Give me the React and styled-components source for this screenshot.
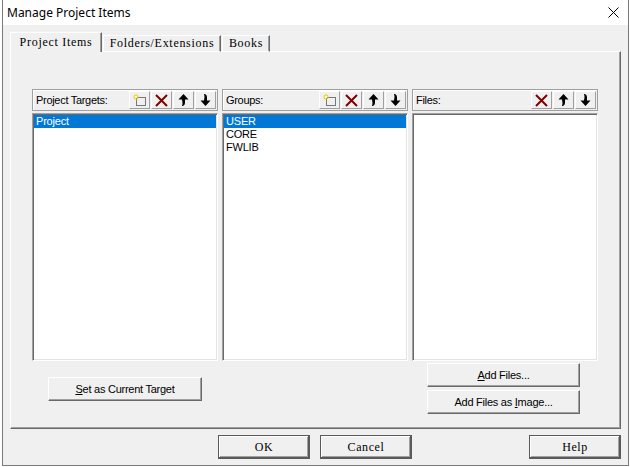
import React from "react";
import styled, { createGlobalStyle } from "styled-components";

const GlobalStyle = createGlobalStyle`
  body {
    margin: 0;
    background: #ffffff;
    font-family: "Liberation Sans", Arial, sans-serif;
  }
`;

const SANS = `"Liberation Sans", Arial, sans-serif`;
const SYSTEM = `"Liberation Serif", "Times New Roman", serif`;

const Window = styled.div`
  box-sizing: border-box;
  width: 627px;
  height: 466px;
  margin-left: 2px;
  border: 1px solid #7a7a7a;
  border-top: none;
  background: #f0f0f0;
  display: flex;
  flex-direction: column;
`;

const TitleBar = styled.div`
  height: 25px;
  flex-shrink: 0;
  background: #ffffff;
  display: flex;
  align-items: center;
  justify-content: space-between;
  padding: 0 9px 0 4px;
`;

const Title = styled.div`
  font-family: "Noto Sans", sans-serif;
  font-size: 12px;
  color: #000;
`;

const Body = styled.div`
  flex: 1;
  display: flex;
  flex-direction: column;
  padding: 8px 7px 0 7px;
`;

const TabStrip = styled.div`
  display: flex;
  align-items: flex-end;
  height: 19px;
  margin-bottom: -1px;
  position: relative;
  z-index: 1;
`;

const Tab = styled.div`
  box-sizing: border-box;
  width: ${(p) => p.w}px;
  height: ${(p) => (p.active ? 20 : 17)}px;
  margin-left: ${(p) => (p.active ? 0 : 1)}px;
  padding-top: ${(p) => (p.active ? 2 : 0)}px;
  background: #f0f0f0;
  border-top: 1px solid #ffffff;
  border-left: 1px solid #ffffff;
  border-right: 1px solid #696969;
  border-bottom: ${(p) => (p.active ? "none" : "1px solid #ffffff")};
  box-shadow: inset -1px 0 0 #a0a0a0;
  font-family: ${SYSTEM};
  font-size: 12px;
  letter-spacing: 0.7px;
  line-height: 15px;
  text-align: center;
  color: #000;
  white-space: nowrap;
`;

const Panel = styled.div`
  box-sizing: border-box;
  height: 378px;
  border-top: 1px solid #ffffff;
  border-left: 1px solid #ffffff;
  border-right: 1px solid #696969;
  border-bottom: 1px solid #696969;
  box-shadow: inset -1px -1px 0 #a0a0a0;
  padding: 37px 0 0 21px;
`;

const Columns = styled.div`
  display: grid;
  grid-template-columns: repeat(3, 186px);
  column-gap: 4px;
`;

const Column = styled.div`
  display: flex;
  flex-direction: column;
`;

const Header = styled.div`
  box-sizing: border-box;
  height: 22px;
  border: 1px solid #a0a0a0;
  box-shadow: inset 1px 1px 0 #ffffff;
  display: flex;
  align-items: center;
  padding: 0 1px 0 3px;
`;

const Label = styled.span`
  font-family: ${SANS};
  font-size: 11px;
  letter-spacing: -0.3px;
  color: #000;
`;

const ToolGroup = styled.div`
  margin-left: auto;
  display: flex;
  gap: 1px;
`;

const ToolButton = styled.div`
  box-sizing: border-box;
  width: 21px;
  height: 18px;
  border-top: 1px solid #ffffff;
  border-left: 1px solid #ffffff;
  border-right: 1px solid #a0a0a0;
  border-bottom: 1px solid #a0a0a0;
  display: flex;
  align-items: center;
  justify-content: center;
`;

const List = styled.div`
  box-sizing: border-box;
  margin-top: 2px;
  height: 248px;
  background: #ffffff;
  border-top: 1px solid #a0a0a0;
  border-left: 1px solid #a0a0a0;
  border-right: 1px solid #ffffff;
  border-bottom: 1px solid #ffffff;
  box-shadow: inset 1px 1px 0 #696969, inset -1px -1px 0 #e3e3e3;
  padding: 1px 1px 0 1px;
`;

const Item = styled.div`
  height: 13px;
  line-height: 13px;
  padding-left: 2px;
  font-family: ${SANS};
  font-size: 11px;
  letter-spacing: -0.2px;
  color: ${(p) => (p.selected ? "#ffffff" : "#000")};
  background: ${(p) => (p.selected ? "#0078d7" : "transparent")};
`;

const ButtonStack = styled.div`
  display: flex;
  flex-direction: column;
  gap: 3px;
  margin-top: ${(p) => p.top}px;
  padding-left: ${(p) => p.left}px;
`;

const PushButton = styled.div`
  box-sizing: border-box;
  width: ${(p) => p.w}px;
  height: 24px;
  background: #f0f0f0;
  border-top: 1px solid #ffffff;
  border-left: 1px solid #ffffff;
  border-right: 1px solid #696969;
  border-bottom: 1px solid #696969;
  box-shadow: inset -1px -1px 0 #a0a0a0;
  display: flex;
  align-items: center;
  justify-content: center;
  font-family: ${SANS};
  font-size: 11px;
  letter-spacing: -0.25px;
  color: #000;

  u {
    text-decoration: underline;
    text-underline-offset: 1px;
  }
`;

const Footer = styled.div`
  display: flex;
  margin-top: 6px;
`;

const DialogButton = styled.div`
  box-sizing: border-box;
  width: 92px;
  height: 24px;
  margin-left: ${(p) => p.gap || 0}px;
  background: #f0f0f0;
  border: 1px solid #5a5a5a;
  box-shadow: inset -1px -1px 0 #5a5a5a, inset 1px 1px 0 #ffffff,
    inset -2px -2px 0 #a0a0a0;
  display: flex;
  align-items: center;
  justify-content: center;
  font-family: ${SYSTEM};
  font-size: 12px;
  letter-spacing: 0.6px;
  color: #000;
`;

const HelpButton = styled(DialogButton)`
  margin-left: auto;
`;

function CloseIcon() {
  return (
    <svg width="11" height="11" viewBox="0 0 11 11">
      <path d="M0.5 0.5 L10.5 10.5 M10.5 0.5 L0.5 10.5" stroke="#000" strokeWidth="1" />
    </svg>
  );
}

function NewIcon() {
  return (
    <svg width="14" height="13" viewBox="0 0 14 13">
      <rect x="3.5" y="3.5" width="9" height="8" fill="none" stroke="#000" strokeDasharray="1 1" />
      <path d="M3 0 V6 M0 3 H6 M1 1 L5 5 M5 1 L1 5" stroke="#e8d000" strokeWidth="1" />
      <rect x="2" y="2" width="2" height="2" fill="#fffbd0" />
    </svg>
  );
}

function DeleteIcon() {
  return (
    <svg width="13" height="13" viewBox="0 0 13 13">
      <path d="M1 1 L12 12 M12 1 L1 12" stroke="#800000" strokeWidth="2" />
    </svg>
  );
}

function UpIcon() {
  return (
    <svg width="11" height="12" viewBox="0 0 11 12">
      <path d="M5.5 0 L10.5 5.5 L7 5.5 L7 9 Q7 11 5 12 L4 12 Q4.5 10.5 4.5 9 L4 5.5 L0.5 5.5 Z" fill="#000" />
    </svg>
  );
}

function DownIcon() {
  return (
    <svg width="11" height="12" viewBox="0 0 11 12">
      <path d="M5.5 12 L10.5 6.5 L7 6.5 L7 3 Q7 1 5 0 L4 0 Q4.5 1.5 4.5 3 L4 6.5 L0.5 6.5 Z" fill="#000" />
    </svg>
  );
}

function Tools({ withNew }) {
  return (
    <ToolGroup>
      {withNew && (
        <ToolButton>
          <NewIcon />
        </ToolButton>
      )}
      <ToolButton>
        <DeleteIcon />
      </ToolButton>
      <ToolButton>
        <UpIcon />
      </ToolButton>
      <ToolButton>
        <DownIcon />
      </ToolButton>
    </ToolGroup>
  );
}

const targets = ["Project"];
const groups = ["USER", "CORE", "FWLIB"];

export default function App() {
  return (
    <>
      <GlobalStyle />
      <Window>
        <TitleBar>
          <Title>Manage Project Items</Title>
          <CloseIcon />
        </TitleBar>
        <Body>
          <TabStrip>
            <Tab active w={92}>Project Items</Tab>
            <Tab w={118}>Folders/Extensions</Tab>
            <Tab w={48}>Books</Tab>
          </TabStrip>
          <Panel>
            <Columns>
              <Column>
                <Header>
                  <Label>Project Targets:</Label>
                  <Tools withNew />
                </Header>
                <List>
                  {targets.map((t, i) => (
                    <Item key={t} selected={i === 0}>
                      {t}
                    </Item>
                  ))}
                </List>
                <ButtonStack top={16} left={16}>
                  <PushButton w={154}>
                    <span>
                      <u>S</u>et as Current Target
                    </span>
                  </PushButton>
                </ButtonStack>
              </Column>
              <Column>
                <Header>
                  <Label>Groups:</Label>
                  <Tools withNew />
                </Header>
                <List>
                  {groups.map((g, i) => (
                    <Item key={g} selected={i === 0}>
                      {g}
                    </Item>
                  ))}
                </List>
              </Column>
              <Column>
                <Header>
                  <Label>Files:</Label>
                  <Tools />
                </Header>
                <List />
                <ButtonStack top={2} left={15}>
                  <PushButton w={153}>
                    <span>
                      <u>A</u>dd Files...
                    </span>
                  </PushButton>
                  <PushButton w={153}>
                    <span>
                      Add Files as <u>I</u>mage...
                    </span>
                  </PushButton>
                </ButtonStack>
              </Column>
            </Columns>
          </Panel>
          <Footer>
            <DialogButton gap={208}>OK</DialogButton>
            <DialogButton gap={10}>Cancel</DialogButton>
            <HelpButton>Help</HelpButton>
          </Footer>
        </Body>
      </Window>
    </>
  );
}
